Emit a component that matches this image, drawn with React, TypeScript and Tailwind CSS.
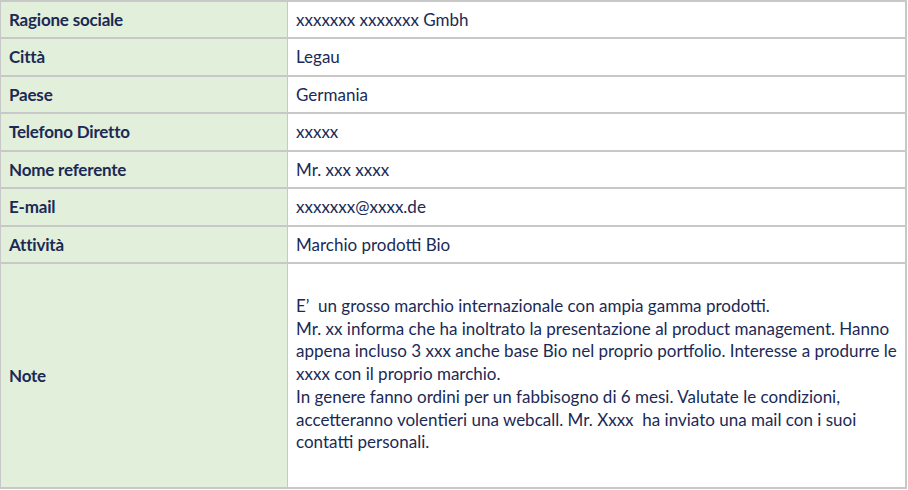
import React from "react";

const rows: [string, string][] = [
  ["Ragione sociale", "xxxxxxx xxxxxxx Gmbh"],
  ["Città", "Legau"],
  ["Paese", "Germania"],
  ["Telefono Diretto", "xxxxx"],
  ["Nome referente", "Mr. xxx xxxx"],
  ["E-mail", "xxxxxxx@xxxx.de"],
  ["Attività", "Marchio prodotti Bio"],
];

const heights = ["h-[37px]", "h-[38px]", "h-[37px]", "h-[38px]", "h-[37px]", "h-[38px]", "h-[37px]"];

const noteLines = [
  "E’  un grosso marchio internazionale con ampia gamma prodotti.",
  "Mr. xx informa che ha inoltrato la presentazione al product management. Hanno",
  "appena incluso 3 xxx anche base Bio nel proprio portfolio. Interesse a produrre le",
  "xxxx con il proprio marchio.",
  "In genere fanno ordini per un fabbisogno di 6 mesi. Valutate le condizioni,",
  "accetteranno volentieri una webcall. Mr. Xxxx  ha inviato una mail con i suoi",
  "contatti personali.",
];

export default function App() {
  return (
    <div
      className="w-[908px] h-[490px] bg-white text-[#1b2a55]"
      style={{ fontFamily: "Lato, 'Noto Sans', sans-serif" }}
    >
      <div className="w-[907px] border-t-2 border-l border-r-2 border-[#c8c8c8]">
        {rows.map(([k, v], i) => (
          <div key={k} className={`flex ${heights[i]} border-b-2 border-[#c8c8c8]`}>
            <div className="w-[287px] shrink-0 bg-[#e2efda] border-r border-[#c8c8c8] flex items-center pl-[8px] text-[17px] font-bold tracking-[-0.2px]">
              {k}
            </div>
            <div className="flex-1 flex items-center pl-[8px] text-[17px]">{v}</div>
          </div>
        ))}
        <div className="flex h-[225px] border-b-2 border-[#c8c8c8]">
          <div className="w-[287px] shrink-0 bg-[#e2efda] border-r border-[#c8c8c8] flex items-center pl-[8px] text-[17px] font-bold tracking-[-0.2px]">
            Note
          </div>
          <div className="flex-1 flex items-center pl-[8px] text-[17px] leading-[22.7px] whitespace-pre">
            <div className="-mt-[2px]">
              {noteLines.map((l) => (
                <div key={l}>{l}</div>
              ))}
            </div>
          </div>
        </div>
      </div>
    </div>
  );
}
